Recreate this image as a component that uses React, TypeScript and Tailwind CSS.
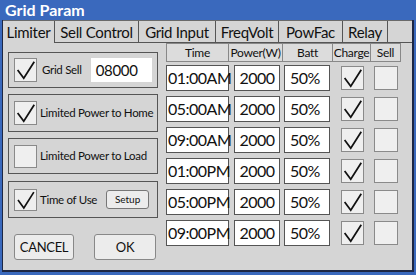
import React from "react";

const Check = () => (
  <svg viewBox="0 0 24 24" className="absolute inset-0 w-full h-full overflow-visible">
    <polyline points="3,12 10,21.5 22,2.5" fill="none" stroke="#111" strokeWidth="2" strokeLinejoin="miter" />
  </svg>
);

const Box: React.FC<{ checked?: boolean; className?: string }> = ({ checked, className = "" }) => (
  <div className={`relative bg-[#efefef] border border-[#8a8a8a] shrink-0 ${className}`}>{checked && <Check />}</div>
);

const tabs = [
  { name: "Limiter", w: "w-[52px]" },
  { name: "Sell Control", w: "w-[84px]" },
  { name: "Grid Input", w: "w-[77px]" },
  { name: "FreqVolt", w: "w-[63px]" },
  { name: "PowFac", w: "w-[64px]" },
  { name: "Relay", w: "w-[45px]" },
];

const rows = ["01:00AM", "05:00AM", "09:00AM", "01:00PM", "05:00PM", "09:00PM"];

export default function App() {
  return (
    <div
      className="w-[416px] h-[275px] bg-[#3a69bd] flex flex-col overflow-hidden"
      style={{ fontFamily: "Lato, 'Noto Sans', sans-serif" }}
    >
      <div className="h-[20px] pl-[5px] text-white font-bold text-[16px] leading-[20px]">Grid Param</div>
      <div className="ml-[2px] w-[412px] h-[252px] bg-[#d5d5d5] border-l border-r-2 border-b-2 border-[#1d2744] flex flex-col">
        <div className="flex h-[23px] border-t border-[#6a6a6a] text-[15px] tracking-[-0.3px] text-[#111] leading-[22px] whitespace-nowrap">
          {tabs.map((t, i) => (
            <div
              key={t.name}
              className={`${t.w} border-r border-[#555] text-center ${i === 0 ? "" : "border-b"}`}
            >
              {t.name}
            </div>
          ))}
          <div className="flex-1 border-b border-[#555]" />
        </div>
        <div className="flex pl-[5px]">
          <div className="w-[150px] flex flex-col pt-[9px] text-[11.5px] tracking-[-0.3px] text-[#111] whitespace-nowrap">
            <div className="h-[36px] border border-[#555] flex items-center pl-[5px]">
              <Box checked className="w-[23px] h-[24px]" />
              <span className="ml-[5px]">Grid Sell</span>
              <div className="ml-[9px] w-[61px] h-[24px] bg-white text-[15px] leading-[24px] pl-[5px]">08000</div>
            </div>
            <div className="mt-[6px] h-[38px] border border-[#555] flex items-center pl-[5px]">
              <Box checked className="w-[23px] h-[24px]" />
              <span className="ml-[3px]">Limited Power to Home</span>
            </div>
            <div className="mt-[6px] h-[36px] border border-[#555] flex items-center pl-[5px]">
              <Box className="w-[23px] h-[23px]" />
              <span className="ml-[3px]">Limited Power to Load</span>
            </div>
            <div className="mt-[7px] h-[37px] border border-[#555] flex items-center pl-[5px]">
              <Box checked className="w-[23px] h-[22px]" />
              <span className="ml-[3px]">Time of Use</span>
              <div className="ml-[9px] w-[43px] h-[19px] bg-[#ececec] border border-[#777] rounded-[3px] text-[10px] tracking-normal leading-[17px] text-center">
                Setup
              </div>
            </div>
            <div className="flex mt-[16px] pl-[6px] gap-[20px] text-[13px]">
              <div className="w-[60px] h-[26px] bg-[#ececec] border border-[#888] rounded-[3px] text-center leading-[24px]">
                CANCEL
              </div>
              <div className="w-[62px] h-[26px] bg-[#ececec] border border-[#888] rounded-[3px] text-center leading-[24px]">
                OK
              </div>
            </div>
          </div>
          <div className="ml-[8px] flex flex-col">
            <div className="flex h-[19px] text-[12px] tracking-[-0.3px] leading-[17px] text-[#111] whitespace-nowrap">
              <div className="w-[63px] border border-[#888] bg-[#dcdcdc] text-center">Time</div>
              <div className="w-[54px] border border-l-0 border-[#888] bg-[#dcdcdc] text-center">Power(W)</div>
              <div className="w-[50px] border border-l-0 border-[#888] bg-[#dcdcdc] text-center">Batt</div>
              <div className="w-[38px] border border-l-0 border-[#888] bg-[#dcdcdc] text-center">Charge</div>
              <div className="w-[30px] border border-l-0 border-[#888] bg-[#dcdcdc] text-center">Sell</div>
            </div>
            <div className="flex flex-col pt-[3px] gap-[5px] text-[16px] tracking-[-0.5px] text-[#111] whitespace-nowrap">
              {rows.map((r) => (
                <div key={r} className="flex items-center h-[26px]">
                  <div className="w-[63px] h-[26px] bg-white border border-[#555] pl-[1px] leading-[24px]">{r}</div>
                  <div className="ml-[5px] w-[46px] h-[26px] bg-white border border-[#555] text-center leading-[24px]">2000</div>
                  <div className="ml-[4px] w-[46px] h-[26px] bg-white border border-[#555] pl-[5px] leading-[24px]">50%</div>
                  <Box checked className="ml-[11px] w-[23px] h-[24px]" />
                  <Box className="ml-[10px] w-[24px] h-[24px]" />
                </div>
              ))}
            </div>
          </div>
        </div>
      </div>
    </div>
  );
}
